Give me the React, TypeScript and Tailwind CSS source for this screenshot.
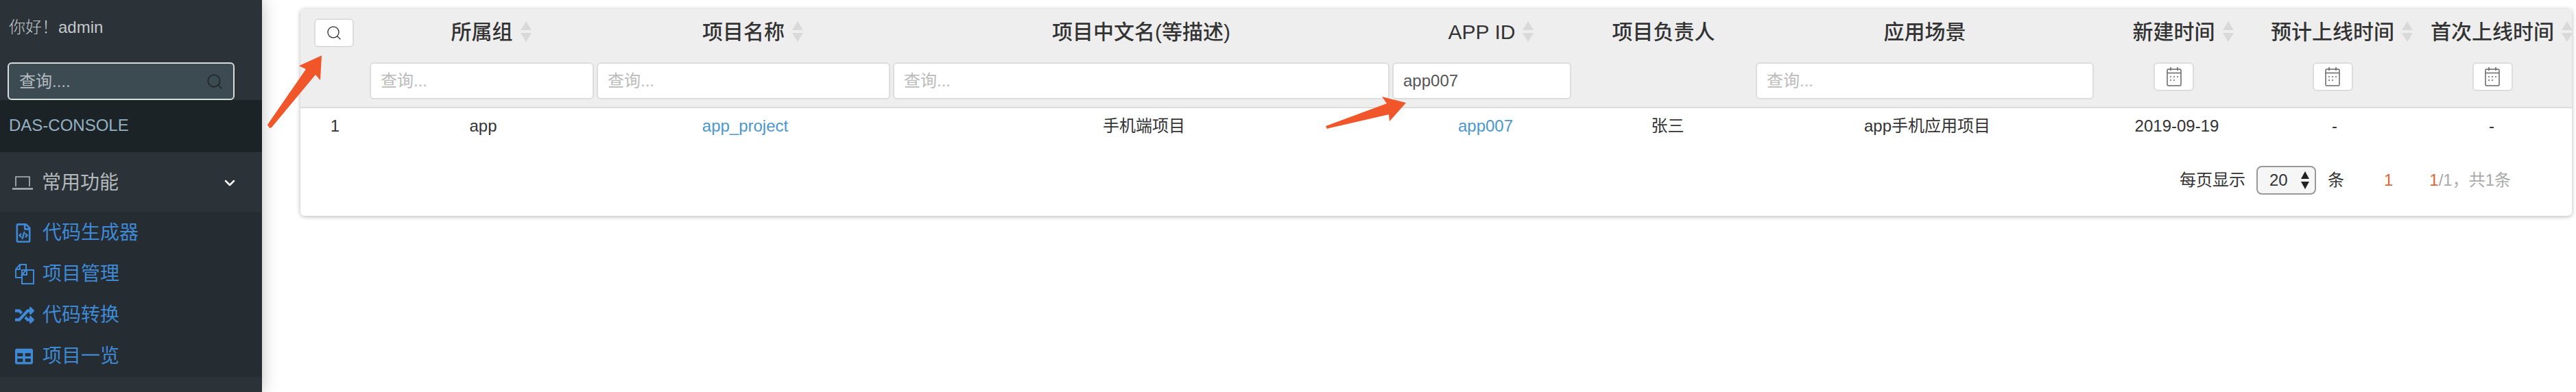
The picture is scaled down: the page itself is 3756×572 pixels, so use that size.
import { Search, ChevronDown } from 'lucide-react';
import { FaRandom, FaTable, FaRegFileCode } from 'react-icons/fa';

const menuItems = [
  { label: '代码生成器', icon: <FaRegFileCode className="w-[24px] h-[28px]" /> },
  { label: '项目管理', icon: <FilesIcon /> },
  { label: '代码转换', icon: <FaRandom className="w-[28px] h-[28px]" /> },
  { label: '项目一览', icon: <FaTable className="w-[26px] h-[26px]" /> },
];

const columns = [
  { title: '', filter: 'search' },
  { title: '所属组', sort: true, filter: 'input', cell: 'app' },
  { title: '项目名称', sort: true, filter: 'input', cell: 'app_project', link: true },
  { title: '项目中文名(等描述)', filter: 'input', cell: '手机端项目' },
  { title: 'APP ID', sort: true, filter: 'input', value: 'app007', cell: 'app007', link: true },
  { title: '项目负责人', filter: 'none', cell: '张三' },
  { title: '应用场景', filter: 'input', cell: 'app手机应用项目' },
  { title: '新建时间', sort: true, filter: 'date', cell: '2019-09-19' },
  { title: '预计上线时间', sort: true, filter: 'date', cell: '-' },
  { title: '首次上线时间', sort: true, filter: 'date', cell: '-' },
];

const headCols = 'grid grid-cols-[99px_331px_432px_728px_265px_265px_497px_229px_234px_232px]';
const bodyCols = 'grid grid-cols-[101px_331px_433px_730px_266px_265px_492px_236px_224px_234px]';

function FilesIcon() {
  return (
    <svg width="28" height="30" viewBox="0 0 28 30" fill="none" stroke="currentColor" strokeWidth="2">
      <path d="M11 1H7L1 8v12h9" />
      <path d="M7 1v7H1" />
      <path d="M11 1h5v8" />
      <path d="M19 9h-9v20h17V9z" />
      <path d="M16 9l-6 7h7V9" />
    </svg>
  );
}

function LaptopIcon() {
  return (
    <svg width="30" height="22" viewBox="0 0 30 22" fill="none" stroke="currentColor" strokeWidth="1.6">
      <path d="M5 16V2h20v14" />
      <path d="M0 19.5h30" strokeWidth="2.4" />
    </svg>
  );
}

function CalendarIcon() {
  return (
    <svg width="22" height="28" viewBox="0 0 22 28" fill="none" stroke="#666" strokeWidth="1.5">
      <rect x="1" y="3" width="20" height="24" rx="1.5" />
      <path d="M1 8.5h20M6 0v5M16 0v5" />
      <path d="M5 14h2M10 14h2M15 14h2M5 19h2M10 19h2" strokeDasharray="2 1" />
    </svg>
  );
}

function SortCaret() {
  return (
    <svg
      className="absolute left-full top-1/2 -translate-y-1/2 ml-[11px]"
      width="16"
      height="30"
      viewBox="0 0 16 30"
      fill="#d9d9d9"
    >
      <path d="M8 0l8 13H0z" />
      <path d="M8 30L0 17h16z" />
    </svg>
  );
}

function FilterCell({ filter, value }: { filter?: string; value?: string }) {
  if (filter === 'search') {
    return (
      <div className="flex justify-center pt-0">
        <button className="-mt-[64px] ml-[-1px] flex h-[42px] w-[58px] items-center justify-center rounded-[6px] border-2 border-[#ddd] bg-white text-[#444]">
          <Search size={24} strokeWidth={1.5} />
        </button>
      </div>
    );
  }
  if (filter === 'input') {
    return (
      <div className="px-[2px]">
        <input
          readOnly
          value={value ?? ''}
          placeholder="查询..."
          className="h-[54px] w-full rounded-[6px] border-2 border-[#ddd] bg-white px-[14px] text-[24px] text-[#555] outline-none placeholder:text-[#bbb]"
        />
      </div>
    );
  }
  if (filter === 'date') {
    return (
      <div className="flex justify-center">
        <button className="flex h-[42px] w-[59px] items-center justify-center rounded-[6px] border-2 border-[#ddd] bg-white">
          <CalendarIcon />
        </button>
      </div>
    );
  }
  return <div />;
}

export default function App() {
  return (
    <div className="relative flex h-[572px] w-[3756px] overflow-hidden bg-white font-['Liberation_Sans','Noto_Sans_CJK_SC',sans-serif]">
      <aside className="z-10 flex w-[382px] shrink-0 flex-col bg-[#2b3238] shadow-[0_0_22px_rgba(0,0,0,0.25)]">
        <div className="flex h-[91px] items-center px-[13px] pb-[12px] text-[24px] font-light text-[#c5c9cc]">你好！admin</div>
        <div className="pl-[11px] pr-[40px]">
          <div className="flex h-[55px] items-center justify-between rounded-[6px] border-2 border-[#d9dcdc] bg-[#3c4a52] pl-[15px] pr-[14px] text-[24px] text-[#b4bcc0]">
            <span>查询....</span>
            <Search size={26} strokeWidth={1.5} className="text-[#1d2429]" />
          </div>
        </div>
        <div className="flex h-[76px] items-center bg-[#1c2327] px-[13px] pb-[2px] text-[24px] font-light text-[#96b1c2]">DAS-CONSOLE</div>
        <div className="flex h-[87px] items-center justify-between pl-[18px] pr-[35px] pt-[2px] text-[28px] text-[#b3b9bc]">
          <div className="flex items-center gap-[13px]">
            <LaptopIcon />
            <span>常用功能</span>
          </div>
          <ChevronDown size={24} strokeWidth={2.5} className="text-white" />
        </div>
        <ul className="bg-[#252c32] pt-[1px] text-[28px] text-[#3f8ad6]">
          {menuItems.map((item) => (
            <li key={item.label} className="flex h-[60px] items-center pl-[22px]">
              <span className="flex w-[40px] justify-start">{item.icon}</span>
              <span>{item.label}</span>
            </li>
          ))}
        </ul>
      </aside>

      <main className="flex-1 pl-[56px] pt-[13px]">
        <div className="h-[302px] w-[3312px] overflow-hidden rounded-[6px] bg-white shadow-[0_1px_6px_rgba(0,0,0,0.3)]">
          <div className={`${headCols} h-[145px] border-b-2 border-[#ddd] bg-[#eee]`}>
            {columns.map((col, i) => (
              <div key={i} className="flex flex-col">
                <div className="flex h-[78px] items-center justify-center pb-[12px] text-[30px] font-medium text-[#333]">
                  <span className="relative">
                    {col.title}
                    {col.sort && <SortCaret />}
                  </span>
                </div>
                <FilterCell filter={col.filter} value={col.value} />
              </div>
            ))}
          </div>
          <div className={`${bodyCols} h-[52px] items-center text-[24px] text-[#333]`}>
            <div className="text-center">1</div>
            {columns.slice(1).map((col, i) => (
              <div key={i} className={col.link ? 'text-center text-[#4a97cf]' : 'text-center'}>
                {col.cell}
              </div>
            ))}
          </div>
          <div className="flex h-[105px] items-center justify-end pr-[89px] text-[24px] text-[#333]">
            <span>每页显示</span>
            <div className="ml-[16px] flex h-[42px] w-[87px] items-center justify-between rounded-[8px] border-2 border-[#999] bg-[#f6f6f6] pl-[17px] pr-[8px]">
              <span>20</span>
              <svg width="12" height="30" viewBox="0 0 12 30" fill="#222">
                <path d="M6 2l6 11H0z" />
                <path d="M6 28L0 17h12z" />
              </svg>
            </div>
            <span className="ml-[17px]">条</span>
            <span className="ml-[58px] text-[#d9683a]">1</span>
            <span className="ml-[53px] text-[#aaa]">
              <span className="text-[#d9683a]">1</span>/1，共1条
            </span>
          </div>
        </div>
      </main>

      {/* annotation arrows drawn over the screenshot */}
      <svg className="pointer-events-none absolute left-0 top-0 z-20" width="3756" height="572" fill="#f0562a">
        <polygon points="390,182 393,187 396,186 460,109 467,117 469,81 436,96 446,101" />
        <polygon points="1933,184 1935,188 1938,187 2025,167 2026,177 2050,150 2015,141 2022,151" />
      </svg>
    </div>
  );
}
